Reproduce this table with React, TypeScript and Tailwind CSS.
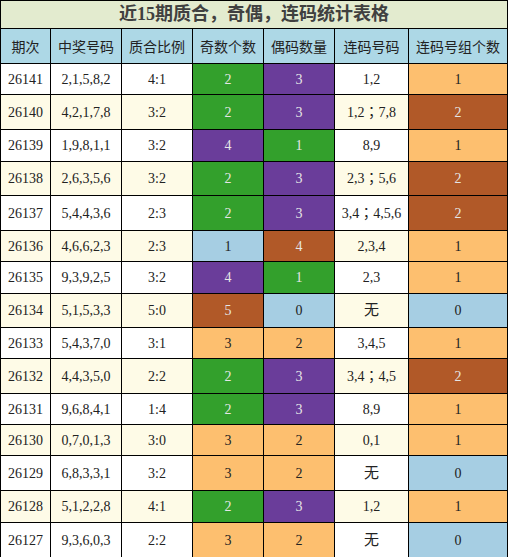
const rows: [string, string, string, number, number, string, number, number][] = [
  ["26141", "2,1,5,8,2", "4:1", 2, 3, "1,2", 1, 31],
  ["26140", "4,2,1,7,8", "3:2", 2, 3, "1,2；7,8", 2, 35],
  ["26139", "1,9,8,1,1", "3:2", 4, 1, "8,9", 1, 32],
  ["26138", "2,6,3,5,6", "3:2", 2, 3, "2,3；5,6", 2, 34],
  ["26137", "5,4,4,3,6", "2:3", 2, 3, "3,4；4,5,6", 2, 35],
  ["26136", "4,6,6,2,3", "2:3", 1, 4, "2,3,4", 1, 31],
  ["26135", "9,3,9,2,5", "3:2", 4, 1, "2,3", 1, 32],
  ["26134", "5,1,5,3,3", "5:0", 5, 0, "无", 0, 34],
  ["26133", "5,4,3,7,0", "3:1", 3, 2, "3,4,5", 1, 31],
  ["26132", "4,4,3,5,0", "2:2", 2, 3, "3,4；4,5", 2, 35],
  ["26131", "9,6,8,4,1", "1:4", 2, 3, "8,9", 1, 31],
  ["26130", "0,7,0,1,3", "3:0", 3, 2, "0,1", 1, 31],
  ["26129", "6,8,3,3,1", "3:2", 3, 2, "无", 0, 35],
  ["26128", "5,1,2,2,8", "4:1", 2, 3, "1,2", 1, 32],
  ["26127", "9,3,6,0,3", "2:2", 3, 2, "无", 0, 35],
];

const oddColor: Record<number, string> = {
  1: "bg-[#a6cee3] text-[#222]",
  2: "bg-[#33a02c] text-[#e6e6e6]",
  3: "bg-[#fdbf6f] text-[#222]",
  4: "bg-[#6a3d9a] text-[#e6e6e6]",
  5: "bg-[#b15928] text-[#e6e6e6]",
};

const evenColor: Record<number, string> = {
  0: "bg-[#a6cee3] text-[#222]",
  1: "bg-[#33a02c] text-[#e6e6e6]",
  2: "bg-[#fdbf6f] text-[#222]",
  3: "bg-[#6a3d9a] text-[#e6e6e6]",
  4: "bg-[#b15928] text-[#e6e6e6]",
};

const groupColor: Record<number, string> = {
  0: "bg-[#a6cee3] text-[#222]",
  1: "bg-[#fdbf6f] text-[#222]",
  2: "bg-[#b15928] text-[#e6e6e6]",
};

const cell = "flex items-center justify-center border-r border-b border-black";
const grid = "grid grid-cols-[50px_71px_71px_71px_71px_74px_99px]";

const App = () => {
  return (
    <div
      className="w-[508px] h-[557px] overflow-hidden border-l border-t border-black text-[14px] text-[#222]"
      style={{ fontFamily: '"Liberation Serif", "Noto Sans CJK SC", serif' }}
    >
      <div className="h-[28px] flex items-center justify-center bg-[#e3ebcf] border-r border-b border-black text-[18px] font-bold text-[#404040]">
        近15期质合，奇偶，连码统计表格
      </div>
      <div className={`${grid} h-[35px] bg-[#add8e6]`} style={{ fontFamily: '"Noto Sans CJK SC", sans-serif' }}>
        {["期次", "中奖号码", "质合比例", "奇数个数", "偶码数量", "连码号码", "连码号组个数"].map((h, i) => (
          <div key={i} className={cell}>
            {h}
          </div>
        ))}
      </div>
      {rows.map((r, i) => {
        const bg = i % 2 === 0 ? "bg-white" : "bg-[#fefbe7]";
        return (
          <div key={r[0]} className={`${grid} ${bg}`} style={{ height: r[7] }}>
            <div className={cell}>{r[0]}</div>
            <div className={cell}>{r[1]}</div>
            <div className={cell}>{r[2]}</div>
            <div className={`${cell} ${oddColor[r[3]]}`}>{r[3]}</div>
            <div className={`${cell} ${evenColor[r[4]]}`}>{r[4]}</div>
            <div
              className={`${cell} ${r[5] === "无" ? "text-[15px]" : ""}`}
              style={{ fontFamily: '"Liberation Serif", "Noto Sans CJK TC", serif' }}
            >
              {r[5]}
            </div>
            <div className={`${cell} ${groupColor[r[6]]}`}>{r[6]}</div>
          </div>
        );
      })}
    </div>
  );
};

export default App;
